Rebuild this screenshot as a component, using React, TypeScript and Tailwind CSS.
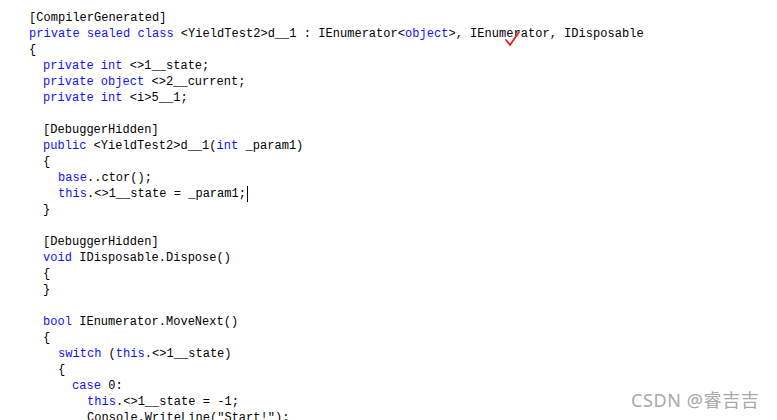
import React from 'react';

type Tok = [string, 'k' | 't'];

const k = (s: string): Tok => [s, 'k'];
const t = (s: string): Tok => [s, 't'];

// indent level (2 chars each) + tokens
const lines: [number, Tok[]][] = [
  [0, [t('[CompilerGenerated]')]],
  [0, [k('private sealed class'), t(' <YieldTest2>d__1 : IEnumerator<'), k('object'), t('>, IEnumerator, IDisposable')]],
  [0, [t('{')]],
  [1, [k('private int'), t(' <>1__state;')]],
  [1, [k('private object'), t(' <>2__current;')]],
  [1, [k('private int'), t(' <i>5__1;')]],
  [0, []],
  [1, [t('[DebuggerHidden]')]],
  [1, [k('public'), t(' <YieldTest2>d__1('), k('int'), t(' _param1)')]],
  [1, [t('{')]],
  [2, [k('base'), t('..ctor();')]],
  [2, [k('this'), t('.<>1__state = _param1;')]],
  [1, [t('}')]],
  [0, []],
  [1, [t('[DebuggerHidden]')]],
  [1, [k('void'), t(' IDisposable.Dispose()')]],
  [1, [t('{')]],
  [1, [t('}')]],
  [0, []],
  [1, [k('bool'), t(' IEnumerator.MoveNext()')]],
  [1, [t('{')]],
  [2, [k('switch'), t(' ('), k('this'), t('.<>1__state)')]],
  [2, [t('{')]],
  [3, [k('case'), t(' 0:')]],
  [4, [k('this'), t('.<>1__state = -1;')]],
  [4, [t('Console.WriteLine('), ['"Start!"', 't'], t(');')]],
];

const indentCls = ['pl-0', 'pl-[14px]', 'pl-[29px]', 'pl-[43px]', 'pl-[58px]'];

export default function App() {
  return (
    <div className="relative w-[777px] h-[420px] overflow-hidden bg-white">
      <div className="pt-[10px] pl-[29px] font-['Liberation_Mono',monospace] text-[12px] leading-[16px] tracking-[0.03px] text-black whitespace-pre">
        {lines.map(([ind, toks], i) => (
          <div key={i} className={`h-4 ${indentCls[ind]}`}>
            {toks.map(([s, c], j) => (
              <span key={j} className={c === 'k' ? 'text-[#1010ff]' : 'text-black'}>
                {s}
              </span>
            ))}
            {i === 11 && <span className="inline-block w-px h-4 bg-black align-top ml-[1px]" />}
          </div>
        ))}
      </div>

      <svg className="absolute left-[504px] top-[29px]" width="18" height="19" viewBox="0 0 18 19">
        <path d="M2 11 L6 16 L15 3" fill="none" stroke="#e0201c" strokeWidth="1.8" strokeLinecap="round" strokeLinejoin="round" />
      </svg>

      <div className="absolute left-[631px] top-[389px] font-['Noto_Sans','Noto_Sans_CJK_SC',sans-serif] text-[18px] leading-[22px] tracking-[0.6px] text-[#a8a8a8] [text-shadow:0_0_2px_#fff]">
        CSDN @睿吉吉
      </div>
    </div>
  );
}
